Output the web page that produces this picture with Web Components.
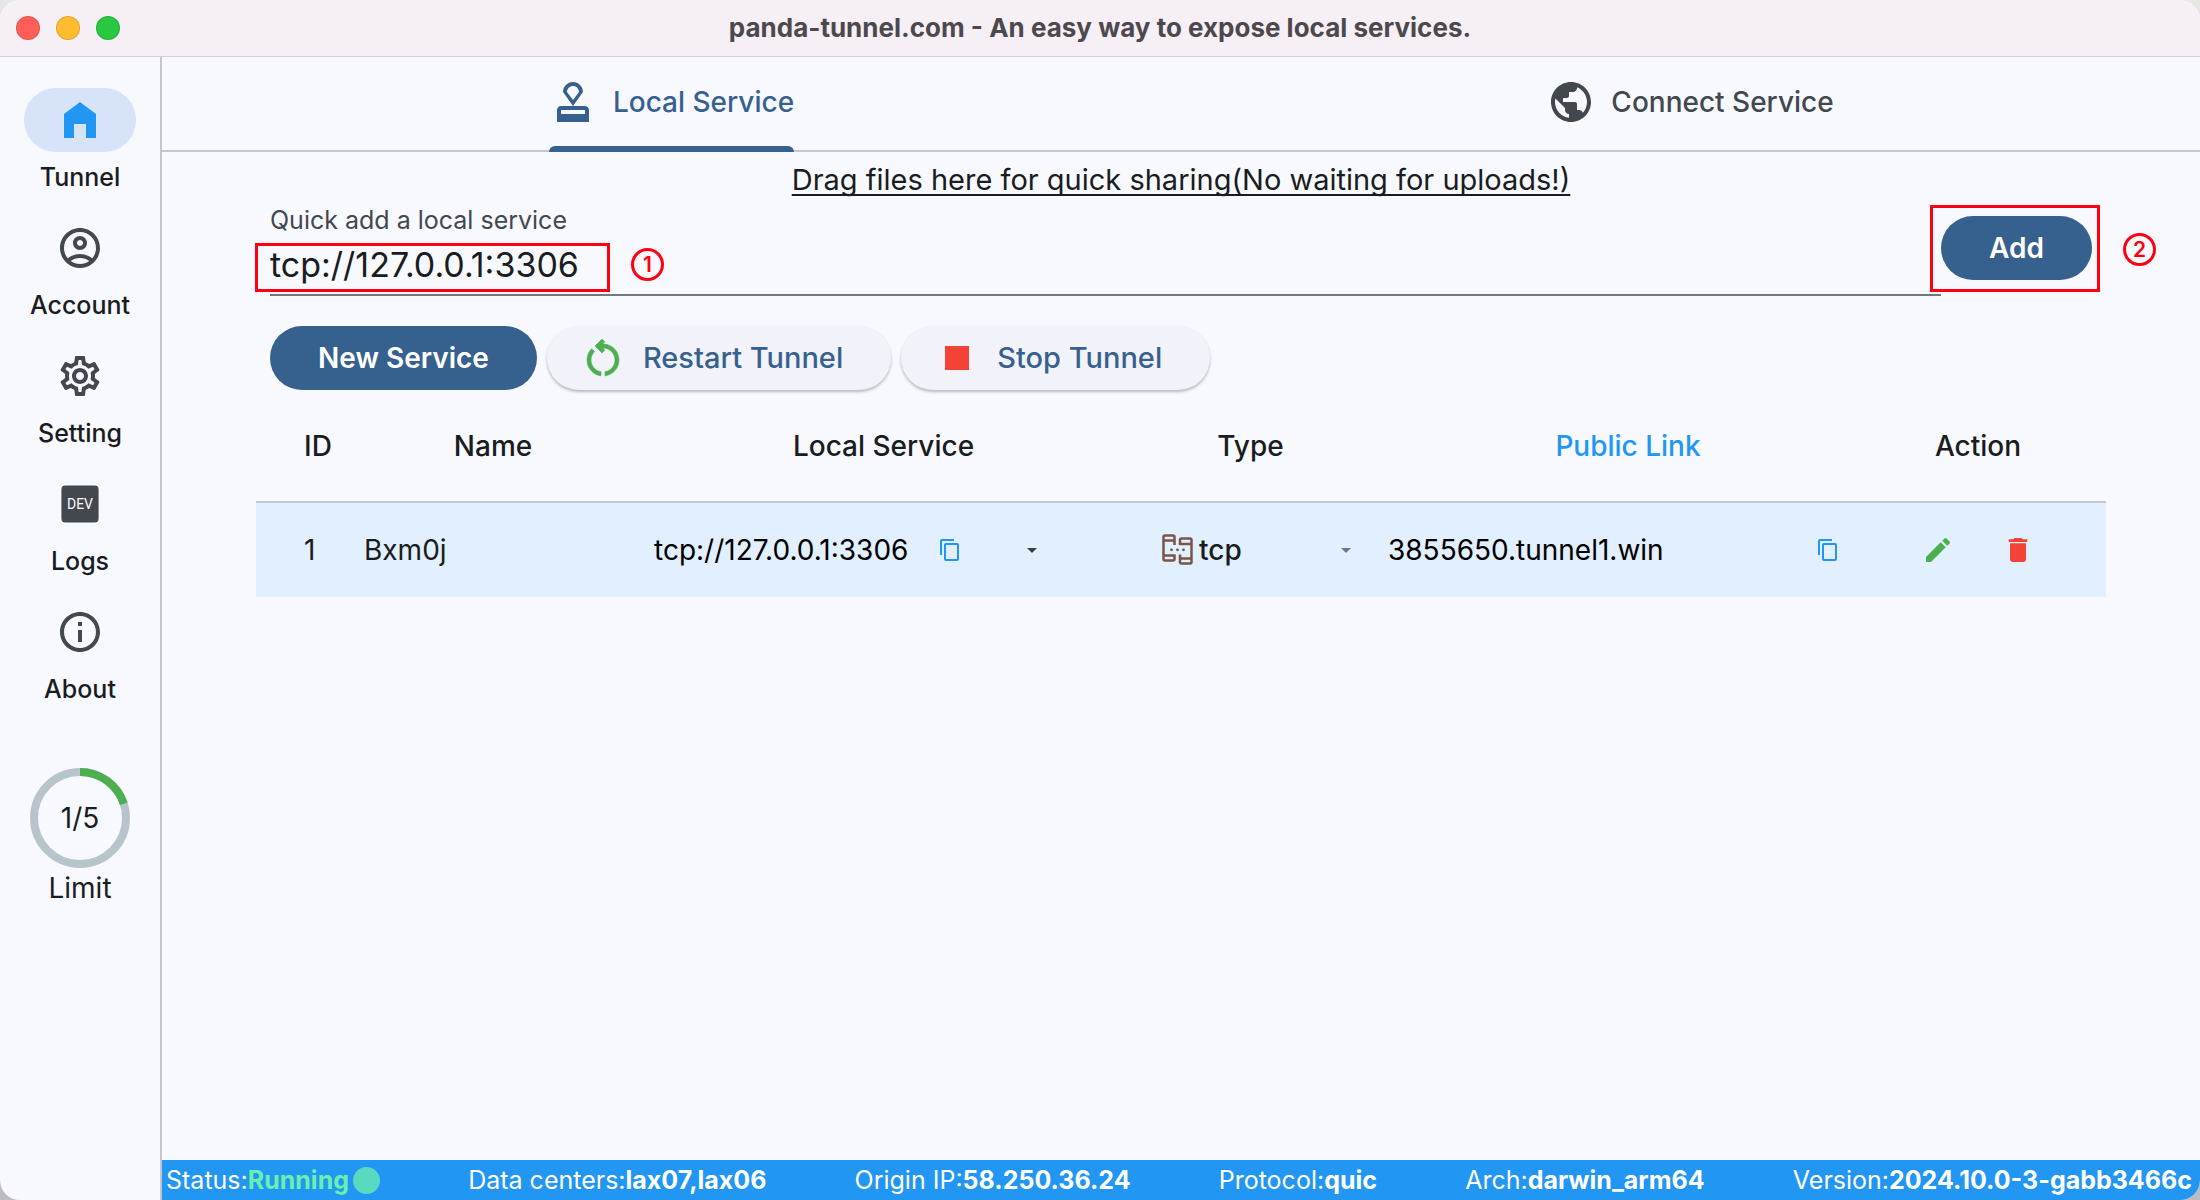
<!DOCTYPE html>
<html lang="en">
<head>
<meta charset="utf-8">
<title>panda-tunnel.com</title>
<style>
  html, body { margin: 0; min-height: 100%; }
  body {
    background: linear-gradient(#e6e6e6, #bdbdbf);
    font-family: Inter, "Noto Sans", sans-serif;
    font-size: 28px;
    line-height: 40px;
    color: #191c20;
    --primary: #36618e;
    --surface: #f8f9ff;
    --variant: #43474e;
    --outline: #73777f;
    --divider: #c3c7cf;
    --blue: #2196f3;
    --green: #4caf50;
    --red: #f44336;
    --mark: #ff0010;
  }
</style>
</head>
<body>
<app-window>
  <title-bar slot="title">panda-tunnel.com - An easy way to expose local services.</title-bar>
  <nav-rail slot="rail">
    <nav-item icon="home" selected>Tunnel</nav-item>
    <nav-item icon="account">Account</nav-item>
    <nav-item icon="settings">Setting</nav-item>
    <nav-item icon="dev">Logs</nav-item>
    <nav-item icon="info">About</nav-item>
    <limit-meter slot="footer" used="1" total="5">Limit</limit-meter>
  </nav-rail>
  <tab-strip>
    <tab-button icon="approval" selected>Local Service</tab-button>
    <tab-button icon="public">Connect Service</tab-button>
  </tab-strip>
  <service-page></service-page>
  <status-bar slot="status">
    <status-item label="Status:" live>Running</status-item>
    <status-item label="Data centers:">lax07,lax06</status-item>
    <status-item label="Origin IP:">58.250.36.24</status-item>
    <status-item label="Protocol:">quic</status-item>
    <status-item label="Arch:">darwin_arm64</status-item>
    <status-item label="Version:">2024.10.0-3-gabb3466c</status-item>
  </status-bar>
</app-window>

<script>
const define = (name, html, setup) => {
  const template = document.createElement('template');
  template.innerHTML = html;
  customElements.define(name, class extends HTMLElement {
    connectedCallback() {
      if (this.shadowRoot) return;
      const root = this.attachShadow({ mode: 'open' });
      root.append(template.content.cloneNode(true));
      if (setup) setup(this, root);
    }
  });
};

const ICONS = {
  home: '<path d="M12 3 4 9v12h5v-7h6v7h5V9z"/>',
  account: '<path d="M12 2C6.48 2 2 6.48 2 12s4.48 10 10 10 10-4.48 10-10S17.52 2 12 2zM7.35 18.5C8.66 17.56 10.26 17 12 17s3.34.56 4.65 1.5C15.34 19.44 13.74 20 12 20s-3.34-.56-4.65-1.5zm10.79-1.38C16.45 15.8 14.32 15 12 15s-4.45.8-6.14 2.12C4.7 15.73 4 13.95 4 12c0-4.42 3.58-8 8-8s8 3.58 8 8c0 1.95-.7 3.73-1.86 5.12z"/><path d="M12 6c-1.93 0-3.5 1.57-3.5 3.5S10.07 13 12 13s3.5-1.57 3.5-3.5S13.93 6 12 6zm0 5c-.83 0-1.5-.67-1.5-1.5S11.17 8 12 8s1.5.67 1.5 1.5S12.83 11 12 11z"/>',
  settings: '<path d="M19.43 12.98c.04-.32.07-.64.07-.98 0-.34-.03-.66-.07-.98l2.11-1.65c.19-.15.24-.42.12-.64l-2-3.46c-.09-.16-.26-.25-.44-.25-.06 0-.12.01-.17.03l-2.49 1c-.52-.4-1.08-.73-1.69-.98l-.38-2.65C14.46 2.18 14.25 2 14 2h-4c-.25 0-.46.18-.49.42l-.38 2.65c-.61.25-1.17.59-1.69.98l-2.49-1c-.06-.02-.12-.03-.18-.03-.17 0-.34.09-.43.25l-2 3.46c-.13.22-.07.49.12.64l2.11 1.65c-.04.32-.07.65-.07.98 0 .33.03.66.07.98l-2.11 1.65c-.19.15-.24.42-.12.64l2 3.46c.09.16.26.25.44.25.06 0 .12-.01.17-.03l2.49-1c.52.4 1.08.73 1.69.98l.38 2.65c.03.24.24.42.49.42h4c.25 0 .46-.18.49-.42l.38-2.65c.61-.25 1.17-.59 1.69-.98l2.49 1c.06.02.12.03.18.03.17 0 .34-.09.43-.25l2-3.46c.12-.22.07-.49-.12-.64l-2.11-1.65zm-1.98-1.71c.04.31.05.52.05.73 0 .21-.02.43-.05.73l-.14 1.13.89.7 1.08.84-.7 1.21-1.27-.51-1.04-.42-.9.68c-.43.32-.84.56-1.25.73l-1.06.43-.16 1.13-.2 1.35h-1.4l-.19-1.35-.16-1.13-1.06-.43c-.43-.18-.83-.41-1.23-.71l-.91-.7-1.06.43-1.27.51-.7-1.21 1.08-.84.89-.7-.14-1.13c-.03-.31-.05-.54-.05-.74s.02-.43.05-.73l.14-1.13-.89-.7-1.08-.84.7-1.21 1.27.51 1.04.42.9-.68c.43-.32.84-.56 1.25-.73l1.06-.43.16-1.13.2-1.35h1.39l.19 1.35.16 1.13 1.06.43c.43.18.83.41 1.23.71l.91.7 1.06-.43 1.27-.51.7 1.21-1.07.85-.89.7.14 1.13zM12 8c-2.21 0-4 1.79-4 4s1.79 4 4 4 4-1.79 4-4-1.79-4-4-4zm0 6c-1.1 0-2-.9-2-2s.9-2 2-2 2 .9 2 2-.9 2-2 2z"/>',
  info: '<path d="M11 7h2v2h-2zm0 4h2v6h-2zm1-9C6.48 2 2 6.48 2 12s4.48 10 10 10 10-4.48 10-10S17.52 2 12 2zm0 18c-4.41 0-8-3.59-8-8s3.59-8 8-8 8 3.59 8 8-3.59 8-8 8z"/>',
  approval: '<path d="M4 16v6h16v-6c0-1.1-.9-2-2-2H6c-1.1 0-2 .9-2 2zm14 2H6v-2h12v2zM12 2C9.24 2 7 4.24 7 7l5 7 5-7c0-2.76-2.24-5-5-5zm0 9L9 7c0-1.66 1.34-3 3-3s3 1.34 3 3l-3 4z"/>',
  public: '<path d="M12 2C6.48 2 2 6.48 2 12s4.48 10 10 10 10-4.48 10-10S17.52 2 12 2zm-1 17.93c-3.95-.49-7-3.85-7-7.93 0-.62.08-1.21.21-1.79L9 15v1c0 1.1.9 2 2 2v1.93zm6.9-2.54c-.26-.81-1-1.39-1.9-1.39h-1v-3c0-.55-.45-1-1-1H8v-2h2c.55 0 1-.45 1-1V7h2c1.1 0 2-.9 2-2v-.41c2.93 1.19 5 4.06 5 7.41 0 2.08-.8 3.97-2.1 5.39z"/>',
  restart: '<path d="M6 13c0-1.65.67-3.15 1.76-4.24L6.34 7.34C4.9 8.79 4 10.79 4 13c0 4.08 3.05 7.44 7 7.93v-2.02c-2.83-.48-5-2.94-5-5.91zm14 0c0-4.42-3.58-8-8-8-.06 0-.12.01-.18.01l1.09-1.09L11.5 2.5 8 6l3.5 3.5 1.41-1.41-1.08-1.08c.06 0 .12-.01.17-.01 3.31 0 6 2.69 6 6 0 2.97-2.17 5.43-5 5.91v2.02c3.95-.49 7-3.85 7-7.93z" stroke="currentColor" stroke-width=".3"/>',
  stop: '<path d="M6 6h12v12H6z"/>',
  copy: '<path d="M16 1H4c-1.100 0-2 .9-2 2v14h2V3h12V1zm3 4H8c-1.100 0-2 .9-2 2v14c0 1.100.9 2 2 2h11c1.100 0 2-.9 2-2V7c0-1.100-.9-2-2-2zm0 16H8V7h11v14z"/>',
  arrow: '<path d="m7 10 5 5 5-5z"/>',
  edit: '<path d="M3 17.250V21h3.750L17.810 9.940l-3.750-3.750L3 17.250zM20.710 7.040c.39-.39.39-1.020 0-1.410l-2.340-2.340c-.39-.39-1.020-.39-1.410 0l-1.830 1.830 3.750 3.750 1.830-1.830z"/>',
  trash: '<path d="M6 19c0 1.100.9 2 2 2h8c1.100 0 2-.9 2-2V7H6v12zM19 4h-3.500l-1-1h-5l-1 1H5v2h14V4z"/>',
  dev: '<rect x="2.700" y="2.700" width="18.600" height="18.600" rx="2"/><text x="12" y="14.500" text-anchor="middle" font-family="Roboto, sans-serif" font-size="7" fill="#f8f9ff">DEV</text>',
  tcp: '<g fill="none" stroke="currentColor" stroke-width="2.500" transform="scale(.75)"><path d="M13.500 11V3q0-1.500-1.500-1.500H4Q2.500 1.500 2.500 3v22q0 1.500 1.500 1.500h8q1.500 0 1.500-1.500v-4.500M2.500 6.500h11M2.500 21.500h11M19 11V6q0-1.500 1.500-1.500H29q1.500 0 1.500 1.500v22q0 1.500-1.500 1.500h-8.500Q19 29.500 19 28v-7.500M19 10h11.500M19 24.500h11.500"/></g><g transform="scale(.75)"><circle cx="10.500" cy="15.800" r="1.400"/><circle cx="16.500" cy="15.800" r="1.400"/><circle cx="22.500" cy="15.800" r="1.400"/></g>'
};

define('m-icon', `
  <style>
    :host { display: block; flex: none; width: 48px; height: 48px; }
    :host([size="small"]) { width: 24px; height: 24px; }
    :host([size="medium"]) { width: 32px; height: 32px; }
    svg { display: block; width: 100%; height: 100%; fill: currentColor; }
  </style>
  <svg viewBox="0 0 24 24" aria-hidden="true"></svg>`,
  (el, root) => { root.querySelector('svg').innerHTML = ICONS[el.getAttribute('name')]; });

define('app-window', `
  <style>
    :host {
      display: grid; grid-template: auto 1fr / auto minmax(0, 1fr);
      min-height: 100vh; overflow: hidden; border-radius: 20px; background: var(--surface);
    }
    header { grid-column: 1 / -1; box-shadow: 0 1px #d3cfdb; z-index: 1; }
    main { display: flex; flex-direction: column; min-width: 0; }
    .body { flex: 1; }
  </style>
  <header><slot name="title"></slot></header>
  <slot name="rail"></slot>
  <main><div class="body"><slot></slot></div><slot name="status"></slot></main>`);

define('title-bar', `
  <style>
    :host {
      display: grid; grid-template-columns: 1fr auto 1fr; align-items: center;
      height: 56px; padding: 0 16px; background: #f7eff6;
      font-size: 26px; line-height: 32px; color: #4b494d;
    }
    .lights { display: flex; gap: 16px; }
    .lights button {
      width: 24px; height: 24px; padding: 0; border: 1px solid rgba(0, 0, 0, .12);
      border-radius: 50%; background: var(--c);
    }
    h1 { margin: 0; font: inherit; font-weight: 700; }
  </style>
  <div class="lights">
    <button aria-label="Close" style="--c:#ff5f57"></button>
    <button aria-label="Minimise" style="--c:#febc2e"></button>
    <button aria-label="Zoom" style="--c:#28c840"></button>
  </div>
  <h1><slot></slot></h1>`);

define('nav-rail', `
  <style>
    :host { display: block; box-sizing: border-box; width: 162px; border-right: 2px solid var(--divider); }
    nav { display: flex; flex-direction: column; gap: 22px; padding: 32px 0 62px; }
  </style>
  <nav><slot></slot></nav>
  <slot name="footer"></slot>`);

define('nav-item', `
  <style>
    :host { display: block; color: var(--variant); }
    a { display: flex; flex-direction: column; align-items: center; gap: 8px; color: inherit; text-decoration: none; }
    .pill { display: grid; place-items: center; width: 112px; height: 64px; border-radius: 32px; }
    :host([selected]) .pill { background: #d7e3f8; color: var(--blue); }
    .label { font-size: 25px; line-height: 34px; font-weight: 500; color: #191c20; }
  </style>
  <a href="#"><span class="pill"></span><span class="label"><slot></slot></span></a>`,
  (el, root) => {
    const icon = document.createElement('m-icon');
    icon.setAttribute('name', el.getAttribute('icon'));
    root.querySelector('.pill').append(icon);
  });

define('limit-meter', `
  <style>
    :host { display: flex; flex-direction: column; align-items: center; }
    .ring { display: grid; place-items: center; width: 100px; height: 100px; }
    .ring > * { grid-area: 1 / 1; }
    svg { width: 100px; height: 100px; fill: none; stroke-width: 8; }
  </style>
  <div class="ring">
    <svg viewBox="0 0 100 100" aria-hidden="true">
      <circle cx="50" cy="50" r="46" stroke="#b7c5ca"/>
      <circle class="used" cx="50" cy="50" r="46" pathLength="100" stroke="#4caf50" transform="rotate(-90 50 50)"/>
    </svg>
    <span></span>
  </div>
  <slot></slot>`,
  (el, root) => {
    const used = el.getAttribute('used'), total = el.getAttribute('total');
    root.querySelector('span').textContent = used + '/' + total;
    root.querySelector('.used').setAttribute('stroke-dasharray', 100 * used / total + ' 100');
  });

define('tab-strip', `
  <style>
    :host { display: block; border-bottom: 2px solid var(--divider); }
    div { display: grid; grid-template-columns: 1fr 1fr; height: 94px; }
  </style>
  <div role="tablist"><slot></slot></div>`);

define('tab-button', `
  <style>
    :host { display: flex; justify-content: center; color: var(--variant); }
    button {
      display: grid; grid-template-rows: 1fr 6px; box-sizing: border-box; height: 96px;
      padding: 2px 0 0; border: 0; background: none;
      font: inherit; font-weight: 500; color: inherit;
    }
    .content { display: flex; align-items: center; gap: 16px; }
    :host([selected]) { color: var(--primary); }
    :host([selected]) .bar { background: var(--primary); border-radius: 6px 6px 0 0; }
  </style>
  <button role="tab"><span class="content"><slot></slot></span><span class="bar"></span></button>`,
  (el, root) => {
    const icon = document.createElement('m-icon');
    icon.setAttribute('name', el.getAttribute('icon'));
    root.querySelector('.content').prepend(icon);
    root.querySelector('button').setAttribute('aria-selected', el.hasAttribute('selected'));
  });

define('pill-button', `
  <style>
    :host { display: block; }
    button {
      display: flex; align-items: center; gap: 16px; height: 64px; padding: 0 48px;
      border: 0; border-radius: 32px; background: var(--primary); color: #fff;
      font: inherit; font-weight: 600; white-space: nowrap;
    }
    :host([tonal]) button {
      padding-left: 32px; background: #f2f3fa; color: var(--primary); font-size: 29px; font-weight: 500;
      box-shadow: 0 2px 3px rgba(0, 0, 0, .26);
    }
    ::slotted(m-icon) { color: var(--icon); }
  </style>
  <button><slot name="icon"></slot><slot></slot></button>`);

define('step-badge', `
  <style>
    :host {
      position: absolute; box-sizing: border-box; width: 33px; height: 33px;
      border: 3px solid var(--mark); border-radius: 50%; color: var(--mark);
      font-size: 21px; line-height: 27px; font-weight: 600; text-align: center;
    }
  </style><slot></slot>`);

define('quick-add', `
  <style>
    :host { display: flex; align-items: center; padding: 0 14px; }
    .field {
      position: relative; flex: 1; display: flex; flex-direction: column; gap: 4px;
      padding: 4px 0 6px; border-bottom: 2px solid var(--outline);
    }
    label { font-size: 25px; line-height: 32px; color: var(--variant); }
    input {
      height: 48px; padding: 0; border: 0; outline: 0; background: none;
      font: inherit; font-size: 34px; color: inherit;
    }
    .add { position: relative; }
    .frame { position: absolute; border: 3px solid var(--mark); pointer-events: none; }
    .field .frame { left: -15px; top: 43px; width: 349px; height: 43px; }
    .field step-badge { left: 361px; top: 48px; }
    .add .frame { inset: -11px -8px -12px -11px; }
    .add step-badge { right: -64px; top: 17px; }
  </style>
  <div class="field">
    <label for="address">Quick add a local service</label>
    <input id="address" type="text" value="tcp://127.0.0.1:3306">
    <span class="frame"></span><step-badge>1</step-badge>
  </div>
  <div class="add">
    <pill-button>Add</pill-button>
    <span class="frame"></span><step-badge>2</step-badge>
  </div>`);

define('icon-button', `
  <style>
    :host { display: block; flex: none; }
    button {
      display: grid; place-items: center; width: 80px; height: 80px; padding: 0;
      border: 0; border-radius: 50%; background: none; color: inherit;
    }
  </style>
  <button><slot></slot></button>`,
  (el, root) => root.querySelector('button').setAttribute('aria-label', el.getAttribute('label')));

define('service-table', `
  <style>
    :host { display: block; }
    table { width: 100%; table-layout: fixed; border-collapse: collapse; }
    th { height: 112px; padding: 0; font-weight: 500; border-bottom: 2px solid var(--divider); box-sizing: border-box; }
    td { height: 94px; padding: 0; }
    tbody tr { background: #e1efff; }
    th:first-child, td:first-child { padding-left: 48px; text-align: left; }
    .id { width: 92px; } .name { width: 290px; } .local { width: 491px; }
    .type { width: 243px; } .action { width: 222px; }
    .pad { padding: 0 16px; }
    .row { display: flex; align-items: center; }
    .between { justify-content: space-between; }
    .center { justify-content: center; }
    .snug { gap: 2px; }
    th.link { color: var(--blue); }
    th.last, td.last { padding-right: 34px; }
    .address { color: #000; }
    .kind { display: flex; align-items: center; gap: 6px; padding: 0 14px 0 32px; color: #795548; }
    .pick { flex: 1; display: grid; align-items: center; color: #191c20; }
    .pick > * { grid-area: 1 / 1; }
    .pick m-icon { justify-self: end; color: var(--outline); pointer-events: none; }
    select { appearance: none; width: 100%; padding: 0; border: 0; background: none; font: inherit; font-weight: 500; color: inherit; }
  </style>
  <table>
    <colgroup><col class="id"><col class="name"><col class="local"><col class="type"><col><col class="action"></colgroup>
    <thead><tr><th>ID</th><th>Name</th><th>Local Service</th><th>Type</th><th class="link">Public Link</th><th class="last">Action</th></tr></thead>
    <tbody><tr>
      <td>1</td>
      <td class="pad">Bxm0j</td>
      <td class="pad"><div class="row snug"><span class="address">tcp://127.0.0.1:3306</span>
        <icon-button label="Copy address" style="color:var(--blue)"><m-icon name="copy" size="small"></m-icon></icon-button>
        <icon-button label="More" style="color:#3c4046"><m-icon name="arrow" size="small"></m-icon></icon-button></div></td>
      <td><div class="kind"><m-icon name="tcp" size="medium"></m-icon>
        <span class="pick"><select aria-label="Type"><option>tcp</option></select><m-icon name="arrow" size="small"></m-icon></span></div></td>
      <td class="pad"><div class="row between"><span class="address">3855650.tunnel1.win</span>
        <icon-button label="Copy link" style="color:var(--blue)"><m-icon name="copy" size="small"></m-icon></icon-button></div></td>
      <td class="last"><div class="row center">
        <icon-button label="Edit" style="color:var(--green)"><m-icon name="edit" size="medium"></m-icon></icon-button>
        <icon-button label="Delete" style="color:var(--red)"><m-icon name="trash" size="medium"></m-icon></icon-button></div></td>
    </tr></tbody>
  </table>`);

define('service-page', `
  <style>
    :host { display: block; padding: 8px 94px 0; }
    .share { display: block; width: max-content; margin: 0 auto; font-size: 29px; color: inherit;
      text-decoration: underline 2px; text-underline-offset: 4px; text-decoration-skip-ink: none; }
    .tools { display: flex; gap: 10px; padding: 30px 14px 0; }
  </style>
  <a class="share" href="#">Drag files here for quick sharing(No waiting for uploads!)</a>
  <quick-add></quick-add>
  <div class="tools">
    <pill-button>New Service</pill-button>
    <pill-button tonal style="--icon:var(--green)"><m-icon slot="icon" name="restart"></m-icon>Restart Tunnel</pill-button>
    <pill-button tonal style="--icon:var(--red)"><m-icon slot="icon" name="stop"></m-icon>Stop Tunnel</pill-button>
  </div>
  <service-table></service-table>`);

define('status-bar', `
  <style>
    :host {
      display: flex; justify-content: space-between; align-items: center; height: 40px;
      padding: 0 8px 0 4px; background: var(--blue); color: #fff; font-size: 25px; white-space: nowrap;
    }
  </style><slot></slot>`);

define('status-item', `
  <style>
    :host { display: flex; align-items: center; }
    b { font-weight: 700; }
    :host([live]) b { color: #69f0ae; }
    i { display: none; width: 27px; height: 27px; margin-left: 4px; border-radius: 50%; background: #58d9c0; }
    :host([live]) i { display: block; }
  </style>
  <span></span><b><slot></slot></b><i></i>`,
  (el, root) => { root.querySelector('span').textContent = el.getAttribute('label'); });
</script>
</body>
</html>
